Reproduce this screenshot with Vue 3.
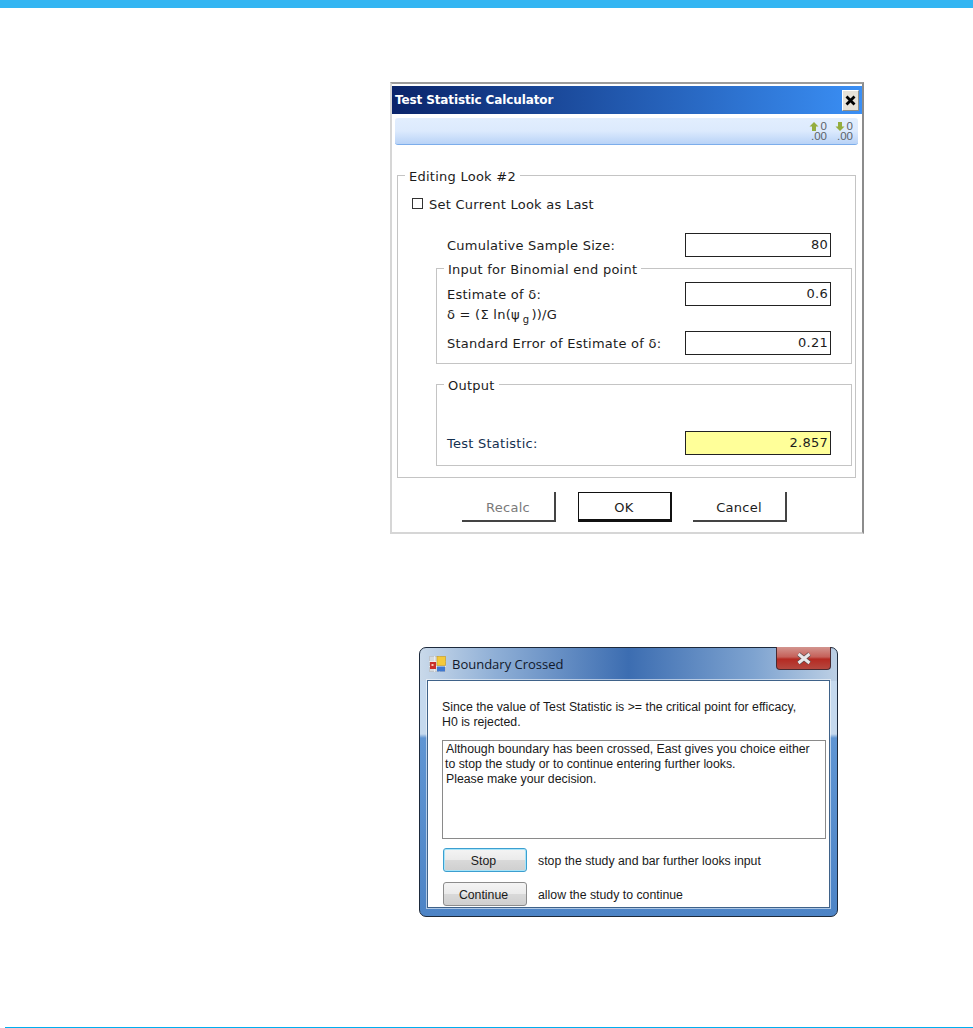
<template>
  <div class="page">
    <div class="top-bar"></div>

    <section class="calc">
      <header class="calc-title">
        <span>Test Statistic Calculator</span>
        <button class="calc-close" aria-label="Close">
          <svg width="11" height="11" viewBox="0 0 11 11">
            <path d="M1.5 1.5 L9.5 9.5 M9.5 1.5 L1.5 9.5" stroke="#000" stroke-width="2.8" />
          </svg>
        </button>
      </header>

      <div class="toolbar">
        <svg v-for="icon in decimalIcons" :key="icon.id" class="dec-icon" width="18" height="18" viewBox="0 0 18 18">
          <path :d="icon.arrow" fill="#94ad3e" />
          <text x="18" y="8.3" class="dec-text">0</text>
          <text x="18" y="17.7" class="dec-text">.00</text>
        </svg>
      </div>

      <fieldset class="group main-group">
        <legend>Editing Look #2</legend>
        <label class="check-row">
          <span class="check-box"></span>
          <span class="check-text">Set Current Look as Last</span>
        </label>

        <div class="row sample-row">
          <span>Cumulative Sample Size:</span>
          <div class="value">80</div>
        </div>

        <fieldset class="group input-group">
          <legend>Input for Binomial end point</legend>
          <div class="row">
            <span>Estimate of δ:</span>
            <div class="value">0.6</div>
          </div>
          <div class="formula">δ = (Σ ln(ψ<sub>g</sub>))/G</div>
          <div class="row">
            <span>Standard Error of Estimate of δ:</span>
            <div class="value">0.21</div>
          </div>
        </fieldset>

        <fieldset class="group output-group">
          <legend>Output</legend>
          <div class="row">
            <span class="stat-label">Test Statistic:</span>
            <div class="value result">2.857</div>
          </div>
        </fieldset>
      </fieldset>

      <div class="calc-actions">
        <button class="flat disabled">Recalc</button>
        <button class="flat primary">OK</button>
        <button class="flat">Cancel</button>
      </div>
    </section>

    <section class="win">
      <header class="win-title">
        <svg class="win-icon" width="17" height="16" viewBox="0 0 17 16">
          <rect x="0.5" y="0.5" width="16" height="15" fill="#d5dade" stroke="#bfc5cb" />
          <path d="M0 5.5 H17 M0 10.5 H17 M5.5 0 V16 M10.5 0 V16" stroke="#eef0f2" stroke-width="0.8" />
          <rect x="1" y="6" width="6" height="7" fill="#c9302a" />
          <rect x="2.5" y="8" width="2" height="2" fill="#f6c9b8" />
          <rect x="8" y="0.5" width="8.5" height="9" fill="#f4c93a" stroke="#c79a20" stroke-width="0.6" />
          <rect x="8" y="10.5" width="8" height="5" fill="#3f78d0" />
        </svg>
        <span>Boundary Crossed</span>
        <button class="win-close" aria-label="Close">
          <svg width="18" height="13" viewBox="0 0 18 13">
            <path d="M3.5 2 L14.5 11 M14.5 2 L3.5 11" stroke="#5a4a4a" stroke-width="4.4" />
            <path d="M3.5 2 L14.5 11 M14.5 2 L3.5 11" stroke="#e8e8ea" stroke-width="3" />
          </svg>
        </button>
      </header>

      <div class="win-body">
        <p class="win-message">
          Since the value of Test Statistic is &gt;= the critical point for efficacy,<br />
          H0 is rejected.
        </p>
        <div class="win-note">
          <span class="first-line">Although boundary has been crossed, East gives you choice either</span><br />
          to stop the study or to continue entering further looks.<br />
          <span class="first-line">Please make your decision.</span>
        </div>
        <div v-for="choice in choices" :key="choice.label" class="choice">
          <button class="win-btn" :class="{ focused: choice.focused }">{{ choice.label }}</button>
          <span>{{ choice.text }}</span>
        </div>
      </div>
    </section>

    <div class="bottom-line"></div>
  </div>
</template>

<script setup>
const decimalIcons = [
  { id: 'more', arrow: 'M5 0 L9.5 4.5 L7 4.5 L7 9 L3 9 L3 4.5 L0.5 4.5 Z' },
  { id: 'less', arrow: 'M3 0 L7 0 L7 4.5 L9.5 4.5 L5 9 L0.5 4.5 L3 4.5 Z' },
]

const choices = [
  { label: 'Stop', text: 'stop the study and bar further looks input', focused: true },
  { label: 'Continue', text: 'allow the study to continue', focused: false },
]
</script>

<style>
html,
body {
  margin: 0;
  background: #fff;
}
</style>

<style scoped>
.page {
  width: 973px;
  height: 1028px;
  display: flex;
  flex-direction: column;
  overflow: hidden;
  background: #fff;
}

.top-bar {
  height: 8px;
  background: #33b5f2;
}

.bottom-line {
  height: 1px;
  margin: auto 0 0 5px;
  background: #00aeef;
}

/* first dialog */
.calc {
  box-sizing: border-box;
  width: 474px;
  height: 452px;
  margin: 74px 0 0 390px;
  padding-top: 2px;
  border: 2px solid #d6d6d6;
  border-top-color: #9c9c9c;
  border-right-color: #8c8c8c;
  font-family: "DejaVu Sans", sans-serif;
  font-size: 13px;
  letter-spacing: 0.25px;
  color: #1c1c1c;
}

.calc-title {
  height: 28px;
  display: flex;
  align-items: center;
  justify-content: space-between;
  padding: 0 3px;
  background: linear-gradient(90deg, #0a246a, #3a8ff5);
  color: #fff;
  font-weight: bold;
  font-size: 12px;
  letter-spacing: -0.12px;
}

.calc-close {
  box-sizing: border-box;
  width: 17px;
  height: 21px;
  padding: 0;
  display: flex;
  align-items: center;
  justify-content: center;
  background: #e6e2d8;
  border: 1px solid #8f8f88;
  border-top-color: #fff;
  border-left-color: #fff;
}

.toolbar {
  box-sizing: border-box;
  height: 27px;
  margin: 4px 4px 0 3px;
  padding-right: 5px;
  display: flex;
  align-items: center;
  justify-content: flex-end;
  gap: 8px;
  border-bottom: 1px solid #7cadeb;
  border-radius: 3px;
  background: linear-gradient(#e2eefe, #dceafd 50%, #b9d3f7);
}

.dec-text {
  font-family: "Liberation Sans", sans-serif;
  font-size: 11.5px;
  letter-spacing: 0;
  text-anchor: end;
  fill: #5c6468;
}

.group {
  box-sizing: border-box;
  margin: 0;
  border: 1px solid #c4c4c4;
  min-width: 0;
}

.group legend {
  padding: 2px 4px 0;
  line-height: 15px;
}

.main-group {
  width: 459px;
  height: 311px;
  margin: 22px 0 0 5px;
  padding: 12px 3px 0 38px;
}

.main-group > legend {
  margin-left: -31px;
}

.check-row {
  display: flex;
  align-items: center;
  gap: 6px;
  height: 14px;
  margin-left: -24px;
}

.check-box {
  box-sizing: border-box;
  width: 11px;
  height: 11px;
  border: 1px solid #333;
}

.check-text {
  padding-top: 2px;
}

.row {
  display: flex;
  align-items: center;
  justify-content: space-between;
  height: 24px;
}

.sample-row {
  margin: 23px 21px 0 11px;
}

.value {
  box-sizing: border-box;
  width: 146px;
  height: 24px;
  padding-right: 2px;
  border: 1px solid #222;
  text-align: right;
  line-height: 21px;
  background: #fff;
}

.value.result {
  background: #ffff99;
}

.stat-label {
  color: #14304f;
}

.input-group,
.output-group {
  width: 416px;
  padding: 5px 20px 0 10px;
}

.input-group {
  height: 104px;
  margin-top: 3px;
}

.input-group > legend,
.output-group > legend {
  margin-left: -3px;
}

.formula {
  height: 18px;
  margin-bottom: 7px;
  line-height: 18px;
}

.formula sub {
  margin: 0 2px 0 3px;
  font-size: 10px;
  line-height: 0;
}

.output-group {
  height: 90px;
  margin-top: 12px;
  padding-top: 38px;
}

.calc-actions {
  display: flex;
  gap: 21.5px;
  margin: 14px 0 0 70px;
}

.flat {
  box-sizing: border-box;
  width: 94px;
  height: 30px;
  padding: 2px 0 0;
  background: #fff;
  border: 0;
  border-right: 2px solid #444;
  border-bottom: 2px solid #444;
  font: inherit;
  letter-spacing: inherit;
  color: #1c1c1c;
}

.flat.disabled {
  color: #7a7a7a;
}

.flat.primary {
  border: 1px solid #111;
  border-right-width: 2px;
  border-bottom-width: 3px;
}

/* second dialog */
.win {
  box-sizing: border-box;
  width: 419px;
  height: 270px;
  margin: 113px 0 0 419px;
  padding: 0 7px 8px;
  display: flex;
  flex-direction: column;
  border: 1px solid #1d2a3c;
  border-radius: 7px;
  background:
    linear-gradient(90deg, #c9d9ea, #8fafd6 18%, #3c6db1 50%, #7ea3d0 80%, #bccfe4) top / 100% 33px no-repeat,
    linear-gradient(#c5d9ee 0 86px, #5f95d3 90px, #4d84c6);
  font-family: "Liberation Sans", sans-serif;
  font-size: 12.3px;
  color: #1a1a1a;
}

.win-title {
  flex: none;
  height: 32px;
  display: flex;
  align-items: center;
  position: relative;
  padding-left: 2px;
  font-family: "Open Sans", sans-serif;
  font-size: 13px;
  color: #10182a;
}

.win-icon {
  margin-right: 6px;
}

.win-close {
  position: absolute;
  top: -1px;
  right: -1px;
  box-sizing: border-box;
  width: 55px;
  height: 23px;
  padding: 0;
  display: flex;
  align-items: center;
  justify-content: center;
  border: 1px solid #4a2a30;
  border-top: 0;
  border-radius: 0 0 4px 4px;
  background: linear-gradient(#d3958f, #c5615a 45%, #b52a22 55%, #b5483f);
}

.win-body {
  flex: 1;
  padding: 19px 3px 0 14px;
  border: 1px solid #3f6289;
  box-shadow: 0 0 0 1px rgba(255, 255, 255, 0.55);
  background: #fff;
}

.win-message {
  margin: 0 0 10px;
  line-height: 15px;
}

.win-note {
  box-sizing: border-box;
  height: 99px;
  padding: 1px 2px;
  border: 1px solid #8a8a8a;
  line-height: 15px;
}

.first-line {
  margin-left: 1px;
}

.choice {
  display: flex;
  align-items: center;
  gap: 11px;
  margin: 9px 0 0 1px;
}

.choice + .choice {
  margin-top: 10px;
}

.choice > span {
  padding-top: 1px;
}

.win-btn {
  box-sizing: border-box;
  width: 84px;
  height: 24px;
  padding: 1px 3px 0 0;
  border: 1px solid #8c8c8c;
  border-radius: 3px;
  background: linear-gradient(#f4f4f4, #ebebeb 48%, #d9d9d9 52%, #cfcfcf);
  font: inherit;
  color: #1a1a1a;
}

.win-btn.focused {
  border-color: #3c9fd0;
  box-shadow: inset 0 0 0 1px #a8e4f8;
}
</style>
